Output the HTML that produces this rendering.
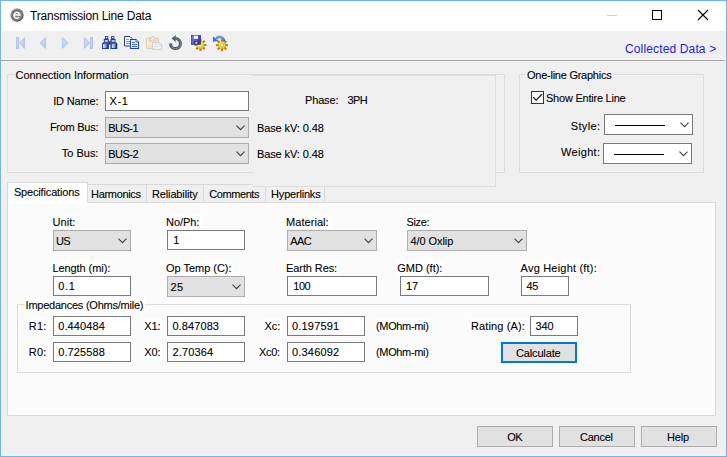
<!DOCTYPE html>
<html><head><meta charset="utf-8"><title>Transmission Line Data</title>
<style>
html,body{margin:0;padding:0;background:#f0f0f0;}
body{width:727px;height:457px;overflow:hidden;position:relative;font-family:"Liberation Sans", sans-serif;}
#win{position:absolute;left:0;top:0;width:725px;height:455px;border:1px solid #70b4f6;background:#f0f0f0;}
#inner{position:absolute;left:1px;top:31px;width:723px;height:424px;border:1px solid #f7f3ee;border-top:none;box-sizing:content-box;}
#title{position:absolute;left:1px;top:1px;width:725px;height:30px;background:#fff;}
.abs,.grp,.edit,.drop,.wcombo,.btn,.t,#appicon{position:absolute;box-sizing:border-box;}
.grp{border:1px solid #dcdcdc;}
.edit{background:#fff;border:1px solid #7a7a7a;}
.drop{background:#e1e1e1;border:1px solid #adadad;}
.wcombo{background:#fff;border:1px solid #7a7a7a;}
.btn{background:#e1e1e1;border:1px solid #adadad;}
.chev{position:absolute;right:3px;top:7px;}
.t{white-space:pre;line-height:14px;height:14px;color:#000;-webkit-text-stroke:0.1px currentColor;}
</style></head>
<body>
<div id="win"></div><div id="inner"></div>
<div id="title"></div>
<svg id="appicon" width="16" height="16" viewBox="0 0 16 16" style="left:9px;top:6.5px">
<defs><linearGradient id="g1" x1="0.2" y1="0" x2="0.8" y2="1"><stop offset="0" stop-color="#b4b4b4"/><stop offset="0.5" stop-color="#7e7e7e"/><stop offset="1" stop-color="#484848"/></linearGradient>
<linearGradient id="g2" x1="0.2" y1="0" x2="0.8" y2="1"><stop offset="0" stop-color="#6a6a6a"/><stop offset="1" stop-color="#8a8a8a"/></linearGradient></defs>
<circle cx="8" cy="8" r="6.7" fill="url(#g1)"/><circle cx="8" cy="8" r="5.5" fill="url(#g2)"/>
<path d="M5.2 7.9 H10.9 A2.95 2.95 0 1 0 10.1 10.3" fill="none" stroke="#fff" stroke-width="1.5"/></svg>
<div style="position:absolute;left:607px;top:15px;width:10px;height:1px;background:#cfcfcf"></div>
<div style="position:absolute;left:652px;top:10px;width:8px;height:8px;border:1px solid #000"></div>
<svg style="position:absolute;left:697px;top:9px" width="12" height="12" viewBox="0 0 12 12"><path d="M1 1 L11 11 M11 1 L1 11" stroke="#000" stroke-width="1.1" fill="none"/></svg>
<div class="abs" style="left:1px;top:60px;width:724px;height:1px;background:#a0a0a0"></div>
<div class="abs" style="left:2px;top:61px;width:723px;height:1px;background:#f7f7f7"></div>
<div class="abs" style="left:1px;top:59px;width:724px;height:1px;background:#fafafa"></div>
<div class="abs" style="left:1px;top:31px;width:1px;height:29px;background:#fff"></div>
<svg class="abs" style="left:0;top:31px" width="240" height="29" viewBox="0 31 240 29">
<defs>
<linearGradient id="nav" x1="0" y1="0" x2="1" y2="1"><stop offset="0" stop-color="#d3e0f8"/><stop offset="1" stop-color="#aec6ee"/></linearGradient>
<linearGradient id="bino" x1="0" y1="0" x2="1" y2="0"><stop offset="0" stop-color="#e8effc"/><stop offset="0.55" stop-color="#8fa6dc"/><stop offset="1" stop-color="#1c3688"/></linearGradient>
<linearGradient id="clip" x1="0" y1="0" x2="1" y2="1"><stop offset="0" stop-color="#fbf3d9"/><stop offset="1" stop-color="#efdcae"/></linearGradient>
<radialGradient id="gear" cx="0.4" cy="0.35" r="0.75"><stop offset="0" stop-color="#fbf090"/><stop offset="0.5" stop-color="#f2dc50"/><stop offset="1" stop-color="#dcb830"/></radialGradient>
<linearGradient id="und" x1="0" y1="0" x2="1" y2="1"><stop offset="0" stop-color="#6a768f"/><stop offset="1" stop-color="#36425a"/></linearGradient>
<linearGradient id="barr" x1="0" y1="0" x2="0" y2="1"><stop offset="0" stop-color="#6aa0f0"/><stop offset="1" stop-color="#2f62cc"/></linearGradient>
<linearGradient id="flop" x1="0" y1="0" x2="1" y2="0.3"><stop offset="0" stop-color="#7f7de0"/><stop offset="1" stop-color="#3d3da6"/></linearGradient>
</defs>
<!-- first / prev / next / last (disabled, pale blue) -->
<g fill="url(#nav)" stroke="#a9c1ea" stroke-width="0.8">
<rect x="16.4" y="37.4" width="2.2" height="11.2"/>
<path d="M24.6 37.6 V48.4 L19.6 43 Z"/>
<path d="M45.6 37.6 V48.4 L39.9 43 Z"/>
<path d="M62.4 37.6 V48.4 L68.2 43 Z"/>
<path d="M84.4 37.6 V48.4 L89.6 43 Z"/>
<rect x="90.4" y="37.4" width="2.2" height="11.2"/>
</g>
<!-- binoculars -->
<g>
<g id="barrelL">
<path d="M105 36 h3.2 v2.8 l0.7 0.7 v9.5 h-6.9 v-5.4 l1.8 -1.6 v-2.9 l1.2 -0.4 z" fill="#1f3a8e"/>
<rect x="103" y="44.1" width="4.6" height="3.9" fill="url(#bino)"/>
<rect x="105.9" y="36.9" width="1.5" height="1.3" fill="#eef3fd"/>
<rect x="104.8" y="40.2" width="3.1" height="1.5" fill="#e3ebfb"/>
<rect x="103.6" y="42.6" width="4.6" height="0.9" fill="#6f86c8"/>
</g>
<g transform="translate(219.3 0) scale(-1 1)">
<path d="M105 36 h3.2 v2.8 l0.7 0.7 v9.5 h-6.9 v-5.4 l1.8 -1.6 v-2.9 l1.2 -0.4 z" fill="#1f3a8e"/>
</g>
<rect x="111.8" y="44.1" width="4.6" height="3.9" fill="url(#bino)"/>
<rect x="112" y="36.9" width="1.5" height="1.3" fill="#eef3fd"/>
<rect x="111.6" y="40.2" width="3.1" height="1.5" fill="#e3ebfb"/>
<rect x="111.2" y="42.6" width="4.6" height="0.9" fill="#6f86c8"/>
<rect x="108.6" y="41.4" width="2.2" height="3.2" fill="#1f3a8e"/>
</g>
<!-- copy -->
<g>
<path d="M124.5 36.5 h5.5 l2.5 2.5 v7 h-8 z" fill="#fafcff" stroke="#24408f" stroke-width="1"/>
<path d="M126 39.5 h3 M126 41.5 h4.5 M126 43.5 h4.5" stroke="#5f8fe6" stroke-width="0.9"/>
<path d="M130.5 39.5 h5.5 l2.5 2.5 v6.5 h-8 z" fill="#e9f0fd" stroke="#2448a8" stroke-width="1.1"/>
<path d="M136 39.5 v2.5 h2.5" fill="#fff" stroke="#2448a8" stroke-width="0.8"/>
<path d="M132 42.5 h3 M132 44.5 h5 M132 46.5 h5" stroke="#3a6ad6" stroke-width="1"/>
</g>
<!-- paste (disabled) -->
<g>
<rect x="146.5" y="38.2" width="12" height="10.2" rx="0.8" fill="url(#clip)" stroke="#d6ccb6" stroke-width="0.9"/>
<path d="M149.4 41 v-2.6 h1.5 v-1 a0.9 0.9 0 0 1 0.9 -0.9 h1.6 a0.9 0.9 0 0 1 0.9 0.9 v1 h1.5 v2.6 z" fill="#ece5d6" stroke="#cfc7b6" stroke-width="0.8"/>
<circle cx="152.6" cy="38.4" r="0.8" fill="#fdfcf8"/>
<path d="M152.6 42.6 h6.6 l2.4 2.4 v4.4 h-9 z" fill="#f0f2f7" stroke="#d2ccc0" stroke-width="0.9"/>
<path d="M159.2 42.6 v2.4 h2.4 z" fill="#fff" stroke="#d2ccc0" stroke-width="0.6"/>
<path d="M154.2 44.4 h3 M154.2 46.4 h4" stroke="#d0d6e2" stroke-width="0.9"/>
</g>
<!-- undo circular arrow -->
<g>
<path d="M175.6 38.6 A5 5 0 1 1 170.5 44.4" fill="none" stroke="#48546c" stroke-width="3"/>
<path d="M175.8 38.6 A5 5 0 1 1 170.6 44" fill="none" stroke="#8591a9" stroke-width="1.1" opacity="0.75"/>
<path d="M168.6 43.6 L172.4 43.6 L171.8 46.2 Z" fill="#48546c"/>
<path d="M171.7 38.5 L175.7 35 L175.7 42.1 Z" fill="#4c5870"/>
</g>
<!-- save + gear -->
<g>
<g transform="translate(200.5 45)"><g fill="#b0860c"><rect x="-1.1" y="-6" width="2.2" height="12" rx="0.3" transform="rotate(0)"/><rect x="-1.1" y="-6" width="2.2" height="12" rx="0.3" transform="rotate(45)"/><rect x="-1.1" y="-6" width="2.2" height="12" rx="0.3" transform="rotate(90)"/><rect x="-1.1" y="-6" width="2.2" height="12" rx="0.3" transform="rotate(135)"/></g><circle r="3.7" fill="url(#gear)" stroke="#c49a14" stroke-width="0.5"/></g>
<rect x="191.4" y="35.4" width="9.2" height="8.9" fill="url(#flop)" stroke="#3a3a9e" stroke-width="0.8"/>
<rect x="193.8" y="35.7" width="4.2" height="3.2" fill="#f6f7fc"/>
<rect x="193.8" y="41.2" width="5.6" height="2.9" fill="#3b4048"/>
<path d="M195 43.8 l0.4 -2.1 h2.2 l-0.4 2.1 z" fill="#b9c0c8"/>
</g>
<!-- reset gear with blue arrow -->
<g>
<path d="M223.8 41.6 A4.2 4.2 0 0 0 216.2 38.7" fill="none" stroke="url(#barr)" stroke-width="2.7"/>
<path d="M213 36.3 V41.7 L218.4 41 Z" fill="#3472dc"/>
<g transform="translate(222 45.2)"><g fill="#b0860c"><rect x="-1.1" y="-6" width="2.2" height="12" rx="0.3" transform="rotate(0)"/><rect x="-1.1" y="-6" width="2.2" height="12" rx="0.3" transform="rotate(45)"/><rect x="-1.1" y="-6" width="2.2" height="12" rx="0.3" transform="rotate(90)"/><rect x="-1.1" y="-6" width="2.2" height="12" rx="0.3" transform="rotate(135)"/></g><circle r="3.7" fill="url(#gear)" stroke="#c49a14" stroke-width="0.5"/><circle r="1.6" fill="#fdfdfa" stroke="#b08a14" stroke-width="0.6"/></g>
</g>
</svg>

<div class="grp" style="left:7px;top:74px;width:498px;height:99px;"></div>
<div class="abs" style="left:253px;top:75px;width:242px;height:111px;background:#f0f0f0;border-right:1px solid #dfdfdf;border-bottom:1px solid #dfdfdf;border-top:1px solid #dfdfdf;box-sizing:border-box;width:243px;height:112px"></div>
<div class="abs" style="left:14px;top:70px;width:117px;height:12px;background:#f0f0f0"></div>
<div class="grp" style="left:519px;top:74px;width:185px;height:99px;"></div>
<div class="abs" style="left:526px;top:70px;width:87px;height:12px;background:#f0f0f0"></div>
<div class="abs" style="left:531px;top:91px;width:13px;height:13px;border:1px solid #333;background:#fff"></div>
<svg class="abs" style="left:531px;top:91px" width="13" height="13" viewBox="0 0 13 13"><path d="M2.2 6.3 L5.1 9.2 L10.9 3.3" fill="none" stroke="#1a1a1a" stroke-width="1.25"/></svg>
<div class="abs" style="left:7px;top:202px;width:708px;height:213px;background:#fff;border:1px solid #d9d9d9;box-sizing:content-box;width:707px;height:212px"></div>
<div class="abs" style="left:11px;top:204px;width:703px;height:209px;background:#fbfbfc"></div>
<div class="abs" style="left:88px;top:184px;width:165px;height:1px;background:#d9d9d9"></div>
<div class="abs" style="left:146px;top:184px;width:1px;height:18px;background:#d9d9d9"></div>
<div class="abs" style="left:203px;top:184px;width:1px;height:18px;background:#d9d9d9"></div>
<div class="abs" style="left:265px;top:187px;width:1px;height:15px;background:#d9d9d9"></div>
<div class="abs" style="left:324px;top:187px;width:1px;height:15px;background:#d9d9d9"></div>
<div class="abs" style="left:253px;top:186px;width:243px;height:1px;background:#dfdfdf"></div>
<div class="abs" style="left:7px;top:182px;width:80px;height:21px;background:#fff;border:1px solid #d9d9d9;border-bottom:none;box-sizing:content-box;width:79px;height:20px"></div>
<div class="grp" style="left:17px;top:304px;width:614px;height:69px;"></div>
<div class="abs" style="left:24px;top:300px;width:121px;height:12px;background:#fff"></div>
<div class="edit" style="left:105px;top:91px;width:144px;height:20px;"></div>
<div class="edit" style="left:167px;top:230px;width:78px;height:20px;"></div>
<div class="edit" style="left:53px;top:276px;width:78px;height:20px;"></div>
<div class="edit" style="left:287px;top:276px;width:90px;height:20px;"></div>
<div class="edit" style="left:400px;top:276px;width:89px;height:20px;"></div>
<div class="edit" style="left:521px;top:276px;width:48px;height:20px;"></div>
<div class="edit" style="left:53px;top:316px;width:78px;height:20px;"></div>
<div class="edit" style="left:53px;top:342px;width:78px;height:20px;"></div>
<div class="edit" style="left:167px;top:316px;width:78px;height:20px;"></div>
<div class="edit" style="left:167px;top:342px;width:78px;height:20px;"></div>
<div class="edit" style="left:287px;top:316px;width:78px;height:20px;"></div>
<div class="edit" style="left:287px;top:342px;width:78px;height:20px;"></div>
<div class="edit" style="left:530px;top:316px;width:48px;height:20px;"></div>
<div class="drop" style="left:105px;top:117px;width:144px;height:21px"><svg class="chev" width="9" height="6" viewBox="0 0 9 6"><path d="M0.5 0.6 L4.5 4.7 L8.5 0.6" fill="none" stroke="#404040" stroke-width="1.05"/></svg></div>
<div class="drop" style="left:105px;top:143px;width:144px;height:21px"><svg class="chev" width="9" height="6" viewBox="0 0 9 6"><path d="M0.5 0.6 L4.5 4.7 L8.5 0.6" fill="none" stroke="#404040" stroke-width="1.05"/></svg></div>
<div class="drop" style="left:53px;top:230px;width:78px;height:21px"><svg class="chev" width="9" height="6" viewBox="0 0 9 6"><path d="M0.5 0.6 L4.5 4.7 L8.5 0.6" fill="none" stroke="#404040" stroke-width="1.05"/></svg></div>
<div class="drop" style="left:287px;top:230px;width:90px;height:21px"><svg class="chev" width="9" height="6" viewBox="0 0 9 6"><path d="M0.5 0.6 L4.5 4.7 L8.5 0.6" fill="none" stroke="#404040" stroke-width="1.05"/></svg></div>
<div class="drop" style="left:407px;top:230px;width:120px;height:21px"><svg class="chev" width="9" height="6" viewBox="0 0 9 6"><path d="M0.5 0.6 L4.5 4.7 L8.5 0.6" fill="none" stroke="#404040" stroke-width="1.05"/></svg></div>
<div class="drop" style="left:167px;top:276px;width:78px;height:21px"><svg class="chev" width="9" height="6" viewBox="0 0 9 6"><path d="M0.5 0.6 L4.5 4.7 L8.5 0.6" fill="none" stroke="#404040" stroke-width="1.05"/></svg></div>
<div class="wcombo" style="left:604px;top:114px;width:89px;height:21px"><svg class="chev" width="9" height="6" viewBox="0 0 9 6"><path d="M0.5 0.6 L4.5 4.7 L8.5 0.6" fill="none" stroke="#404040" stroke-width="1.05"/></svg></div>
<div class="abs" style="left:615px;top:125px;width:50px;height:1px;background:#000"></div>
<div class="wcombo" style="left:603px;top:143px;width:89px;height:21px"><svg class="chev" width="9" height="6" viewBox="0 0 9 6"><path d="M0.5 0.6 L4.5 4.7 L8.5 0.6" fill="none" stroke="#404040" stroke-width="1.05"/></svg></div>
<div class="abs" style="left:614px;top:154px;width:50px;height:1px;background:#000"></div>
<div class="btn" style="left:477px;top:426px;width:76px;height:21px;"></div>
<div class="btn" style="left:559px;top:426px;width:76px;height:21px;"></div>
<div class="btn" style="left:641px;top:426px;width:76px;height:21px;"></div>
<div class="btn" style="left:501px;top:342px;width:76px;height:21px;border:2px solid #0078d7"></div>
<span class="t" style="left:30.0px;top:8.9px;font-size:12px;letter-spacing:-0.20px;-webkit-text-stroke:0">Transmission Line Data</span>
<span class="t" style="left:625.0px;top:42.4px;font-size:12px;letter-spacing:0.14px;color:#1c1cee;-webkit-text-stroke:0">Collected Data &gt;</span>
<span class="t" style="left:15.5px;top:68.4px;font-size:11px;letter-spacing:-0.03px;transform-origin:0 10.6px;transform:scaleY(1.05)">Connection Information</span>
<span class="t" style="left:53.2px;top:94.4px;font-size:11px;letter-spacing:-0.17px;transform-origin:0 10.6px;transform:scaleY(1.05)">ID Name:</span>
<span class="t" style="left:49.9px;top:120.4px;font-size:11px;letter-spacing:-0.27px;transform-origin:0 10.6px;transform:scaleY(1.05)">From Bus:</span>
<span class="t" style="left:61.8px;top:146.4px;font-size:11px;letter-spacing:-0.01px;transform-origin:0 10.6px;transform:scaleY(1.05)">To Bus:</span>
<span class="t" style="left:109.5px;top:93.9px;font-size:11px;letter-spacing:0.60px;transform-origin:0 10.6px;transform:scaleY(1.05)">X-1</span>
<span class="t" style="left:108.2px;top:120.9px;font-size:11px;letter-spacing:-0.48px;transform-origin:0 10.6px;transform:scaleY(1.05)">BUS-1</span>
<span class="t" style="left:108.2px;top:146.9px;font-size:11px;letter-spacing:-0.48px;transform-origin:0 10.6px;transform:scaleY(1.05)">BUS-2</span>
<span class="t" style="left:305.0px;top:93.4px;font-size:11px;letter-spacing:-0.15px;transform-origin:0 10.6px;transform:scaleY(1.05)">Phase:</span>
<span class="t" style="left:347.5px;top:93.4px;font-size:11px;letter-spacing:-0.60px;transform-origin:0 10.6px;transform:scaleY(1.05)">3PH</span>
<span class="t" style="left:257.0px;top:121.4px;font-size:11px;letter-spacing:-0.11px;transform-origin:0 10.6px;transform:scaleY(1.05)">Base kV: 0.48</span>
<span class="t" style="left:257.0px;top:147.4px;font-size:11px;letter-spacing:-0.11px;transform-origin:0 10.6px;transform:scaleY(1.05)">Base kV: 0.48</span>
<span class="t" style="left:527.0px;top:68.4px;font-size:11px;letter-spacing:-0.25px;transform-origin:0 10.6px;transform:scaleY(1.05)">One-line Graphics</span>
<span class="t" style="left:546.0px;top:91.4px;font-size:11px;letter-spacing:-0.23px;transform-origin:0 10.6px;transform:scaleY(1.05)">Show Entire Line</span>
<span class="t" style="left:570.8px;top:118.9px;font-size:11px;letter-spacing:0.34px;transform-origin:0 10.6px;transform:scaleY(1.05)">Style:</span>
<span class="t" style="left:561.1px;top:145.4px;font-size:11px;letter-spacing:0.30px;transform-origin:0 10.6px;transform:scaleY(1.05)">Weight:</span>
<span class="t" style="left:13.9px;top:184.9px;font-size:11px;letter-spacing:-0.16px;transform-origin:0 10.6px;transform:scaleY(1.05)">Specifications</span>
<span class="t" style="left:91.1px;top:186.9px;font-size:11px;letter-spacing:-0.33px;transform-origin:0 10.6px;transform:scaleY(1.05)">Harmonics</span>
<span class="t" style="left:152.0px;top:186.9px;font-size:11px;letter-spacing:-0.14px;transform-origin:0 10.6px;transform:scaleY(1.05)">Reliability</span>
<span class="t" style="left:209.3px;top:186.9px;font-size:11px;letter-spacing:-0.43px;transform-origin:0 10.6px;transform:scaleY(1.05)">Comments</span>
<span class="t" style="left:271.1px;top:186.9px;font-size:11px;letter-spacing:-0.20px;transform-origin:0 10.6px;transform:scaleY(1.05)">Hyperlinks</span>
<span class="t" style="left:52.4px;top:214.9px;font-size:11px;letter-spacing:0.09px;background:#fff;padding-right:2px;transform-origin:0 10.6px;transform:scaleY(1.05)">Unit:</span>
<span class="t" style="left:166.1px;top:214.9px;font-size:11px;letter-spacing:-0.09px;background:#fff;padding-right:2px;transform-origin:0 10.6px;transform:scaleY(1.05)">No/Ph:</span>
<span class="t" style="left:286.1px;top:214.9px;font-size:11px;letter-spacing:0.04px;background:#fff;padding-right:2px;transform-origin:0 10.6px;transform:scaleY(1.05)">Material:</span>
<span class="t" style="left:406.4px;top:214.9px;font-size:11px;letter-spacing:-0.32px;background:#fff;padding-right:2px;transform-origin:0 10.6px;transform:scaleY(1.05)">Size:</span>
<span class="t" style="left:56.0px;top:233.9px;font-size:11px;letter-spacing:-0.60px;transform-origin:0 10.6px;transform:scaleY(1.05)">US</span>
<span class="t" style="left:173.3px;top:233.4px;font-size:11px;letter-spacing:0.00px;transform-origin:0 10.6px;transform:scaleY(1.05)">1</span>
<span class="t" style="left:290.2px;top:233.9px;font-size:11px;letter-spacing:-0.51px;transform-origin:0 10.6px;transform:scaleY(1.05)">AAC</span>
<span class="t" style="left:410.5px;top:233.9px;font-size:11px;letter-spacing:-0.08px;transform-origin:0 10.6px;transform:scaleY(1.05)">4/0 Oxlip</span>
<span class="t" style="left:52.4px;top:261.1px;font-size:11px;letter-spacing:-0.07px;background:#fff;padding-right:2px;transform-origin:0 10.6px;transform:scaleY(1.05)">Length (mi):</span>
<span class="t" style="left:166.1px;top:261.1px;font-size:11px;letter-spacing:-0.04px;background:#fff;padding-right:2px;transform-origin:0 10.6px;transform:scaleY(1.05)">Op Temp (C):</span>
<span class="t" style="left:286.1px;top:261.1px;font-size:11px;letter-spacing:-0.10px;background:#fff;padding-right:2px;transform-origin:0 10.6px;transform:scaleY(1.05)">Earth Res:</span>
<span class="t" style="left:397.2px;top:261.1px;font-size:11px;letter-spacing:-0.00px;background:#fff;padding-right:2px;transform-origin:0 10.6px;transform:scaleY(1.05)">GMD (ft):</span>
<span class="t" style="left:520.6px;top:261.1px;font-size:11px;letter-spacing:0.20px;background:#fff;padding-right:2px;transform-origin:0 10.6px;transform:scaleY(1.05)">Avg Height (ft):</span>
<span class="t" style="left:58.3px;top:279.4px;font-size:11px;letter-spacing:0.60px;transform-origin:0 10.6px;transform:scaleY(1.05)">0.1</span>
<span class="t" style="left:170.6px;top:279.9px;font-size:11px;letter-spacing:0.35px;transform-origin:0 10.6px;transform:scaleY(1.05)">25</span>
<span class="t" style="left:293.3px;top:279.4px;font-size:11px;letter-spacing:-0.48px;transform-origin:0 10.6px;transform:scaleY(1.05)">100</span>
<span class="t" style="left:406.0px;top:279.4px;font-size:11px;letter-spacing:-0.05px;transform-origin:0 10.6px;transform:scaleY(1.05)">17</span>
<span class="t" style="left:526.5px;top:279.4px;font-size:11px;letter-spacing:-0.25px;transform-origin:0 10.6px;transform:scaleY(1.05)">45</span>
<span class="t" style="left:25.6px;top:297.9px;font-size:11px;letter-spacing:-0.24px;background:#fff;padding-right:2px;transform-origin:0 10.6px;transform:scaleY(1.05)">Impedances (Ohms/mile)</span>
<span class="t" style="left:28.8px;top:319.4px;font-size:11px;letter-spacing:0.19px;background:#fff;padding-right:2px;transform-origin:0 10.6px;transform:scaleY(1.05)">R1:</span>
<span class="t" style="left:28.8px;top:344.9px;font-size:11px;letter-spacing:0.19px;background:#fff;padding-right:2px;transform-origin:0 10.6px;transform:scaleY(1.05)">R0:</span>
<span class="t" style="left:58.2px;top:319.4px;font-size:11px;letter-spacing:0.13px;transform-origin:0 10.6px;transform:scaleY(1.05)">0.440484</span>
<span class="t" style="left:58.2px;top:344.9px;font-size:11px;letter-spacing:0.13px;transform-origin:0 10.6px;transform:scaleY(1.05)">0.725588</span>
<span class="t" style="left:144.2px;top:319.4px;font-size:11px;letter-spacing:-0.11px;background:#fff;padding-right:2px;transform-origin:0 10.6px;transform:scaleY(1.05)">X1:</span>
<span class="t" style="left:144.2px;top:344.9px;font-size:11px;letter-spacing:-0.11px;background:#fff;padding-right:2px;transform-origin:0 10.6px;transform:scaleY(1.05)">X0:</span>
<span class="t" style="left:172.4px;top:319.4px;font-size:11px;letter-spacing:0.10px;transform-origin:0 10.6px;transform:scaleY(1.05)">0.847083</span>
<span class="t" style="left:172.4px;top:344.9px;font-size:11px;letter-spacing:0.16px;transform-origin:0 10.6px;transform:scaleY(1.05)">2.70364</span>
<span class="t" style="left:264.6px;top:319.4px;font-size:11px;letter-spacing:-0.15px;background:#fff;padding-right:2px;transform-origin:0 10.6px;transform:scaleY(1.05)">Xc:</span>
<span class="t" style="left:259.1px;top:344.9px;font-size:11px;letter-spacing:-0.31px;background:#fff;padding-right:2px;transform-origin:0 10.6px;transform:scaleY(1.05)">Xc0:</span>
<span class="t" style="left:292.1px;top:319.4px;font-size:11px;letter-spacing:0.16px;transform-origin:0 10.6px;transform:scaleY(1.05)">0.197591</span>
<span class="t" style="left:292.1px;top:344.9px;font-size:11px;letter-spacing:0.16px;transform-origin:0 10.6px;transform:scaleY(1.05)">0.346092</span>
<span class="t" style="left:376.0px;top:319.4px;font-size:11px;letter-spacing:-0.35px;background:#fff;padding-right:2px;transform-origin:0 10.6px;transform:scaleY(1.05)">(MOhm-mi)</span>
<span class="t" style="left:376.0px;top:344.9px;font-size:11px;letter-spacing:-0.35px;background:#fff;padding-right:2px;transform-origin:0 10.6px;transform:scaleY(1.05)">(MOhm-mi)</span>
<span class="t" style="left:471.0px;top:319.4px;font-size:11px;letter-spacing:0.12px;background:#fff;padding-right:2px;transform-origin:0 10.6px;transform:scaleY(1.05)">Rating (A):</span>
<span class="t" style="left:535.6px;top:319.4px;font-size:11px;letter-spacing:-0.13px;transform-origin:0 10.6px;transform:scaleY(1.05)">340</span>
<span class="t" style="left:515.9px;top:346.4px;font-size:11px;letter-spacing:-0.13px;transform-origin:0 10.6px;transform:scaleY(1.05)">Calculate</span>
<span class="t" style="left:507.3px;top:430.4px;font-size:11px;letter-spacing:-0.60px;transform-origin:0 10.6px;transform:scaleY(1.05)">OK</span>
<span class="t" style="left:580.0px;top:430.4px;font-size:11px;letter-spacing:-0.25px;transform-origin:0 10.6px;transform:scaleY(1.05)">Cancel</span>
<span class="t" style="left:666.9px;top:430.4px;font-size:11px;letter-spacing:-0.11px;transform-origin:0 10.6px;transform:scaleY(1.05)">Help</span>
</body></html>
